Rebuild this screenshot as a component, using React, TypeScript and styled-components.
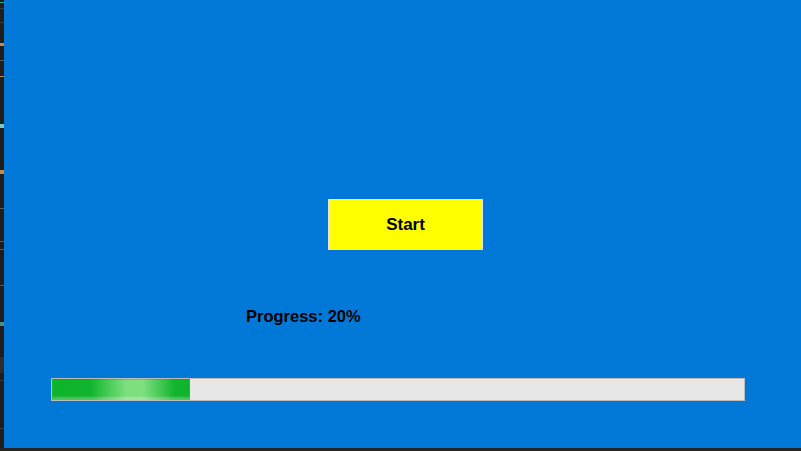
import React from 'react';
import styled, { createGlobalStyle } from 'styled-components';

const GlobalStyle = createGlobalStyle`
  html, body {
    margin: 0;
    padding: 0;
    background: #1e1e1e;
    overflow: hidden;
  }
`;

const Screen = styled.div`
  display: flex;
  flex-direction: column;
  width: 801px;
  height: 451px;
  background: #252526;
`;

const Top = styled.div`
  display: flex;
  height: 448px;
`;

const EditorEdge = styled.div`
  display: flex;
  flex-direction: column;
  width: 4px;
  background: #1e1e1e;
`;

const EdgeMark = styled.div<{ top: number; color: string; h?: number }>`
  margin-top: ${p => p.top}px;
  height: ${p => p.h || 1}px;
  width: 4px;
  background: ${p => p.color};
`;

const Window = styled.div`
  flex: 1;
  display: flex;
  flex-direction: column;
  background: #0078d7;
  font-family: "Liberation Sans", Arial, sans-serif;
  color: #000;
`;

const StartButton = styled.button`
  box-sizing: border-box;
  margin: 199px 0 0 324px;
  width: 155px;
  height: 51px;
  background: #ffff00;
  border: 1px solid #e3e3e3;
  font-family: "Liberation Sans", Arial, sans-serif;
  font-weight: bold;
  font-size: 17px;
  color: #000;
  padding: 0;
  cursor: pointer;
`;

const ProgressLabel = styled.div`
  margin: 57px 0 0 242px;
  font-size: 16.5px;
  font-weight: bold;
  line-height: 19px;
  height: 19px;
`;

const Track = styled.div`
  box-sizing: border-box;
  margin: 52px 0 0 47px;
  width: 694px;
  height: 23px;
  border: 1px solid #bcbcbc;
  background: #e6e6e6;
  display: flex;
`;

const Fill = styled.div`
  height: 100%;
  background: linear-gradient(
    90deg,
    #0db42b 0%,
    #10b52d 28%,
    #4ccd5a 42%,
    #7ce07e 54%,
    #7edf7e 66%,
    #45c955 78%,
    #12b52e 89%,
    #0db42b 100%
  );
  box-shadow: inset 0 1px 0 rgba(0, 110, 20, 0.2), inset 0 -3px 2px rgba(255, 255, 255, 0.25);
`;

const value = 20;

export default function App() {
  return (
    <>
      <GlobalStyle />
      <Screen>
        <Top>
          <EditorEdge>
            <EdgeMark top={2} color="#2aa198" />
            <EdgeMark top={5} color="#3c3c3c" />
            <EdgeMark top={13} color="#3c3c3c" />
            <EdgeMark top={20} color="#c8884a" h={3} />
            <EdgeMark top={14} color="#5a5a5a" />
            <EdgeMark top={15} color="#c8884a" />
            <EdgeMark top={47} color="#7fc6c0" h={4} />
            <EdgeMark top={42} color="#c8884a" h={4} />
            <EdgeMark top={34} color="#5a5a5a" />
            <EdgeMark top={32} color="#5a5a5a" />
            <EdgeMark top={7} color="#5a5a5a" />
            <EdgeMark top={35} color="#5a5a5a" />
            <EdgeMark top={36} color="#4e8c8c" h={4} />
            <EdgeMark top={31} color="#2d2d2d" h={16} />
            <EdgeMark top={7} color="#3a3a3a" />
            <EdgeMark top={47} color="#3c3c3c" />
          </EditorEdge>
          <Window>
            <StartButton>Start</StartButton>
            <ProgressLabel>Progress: {value}%</ProgressLabel>
            <Track>
              <Fill style={{ width: `${value}%` }} />
            </Track>
          </Window>
        </Top>
      </Screen>
    </>
  );
}
